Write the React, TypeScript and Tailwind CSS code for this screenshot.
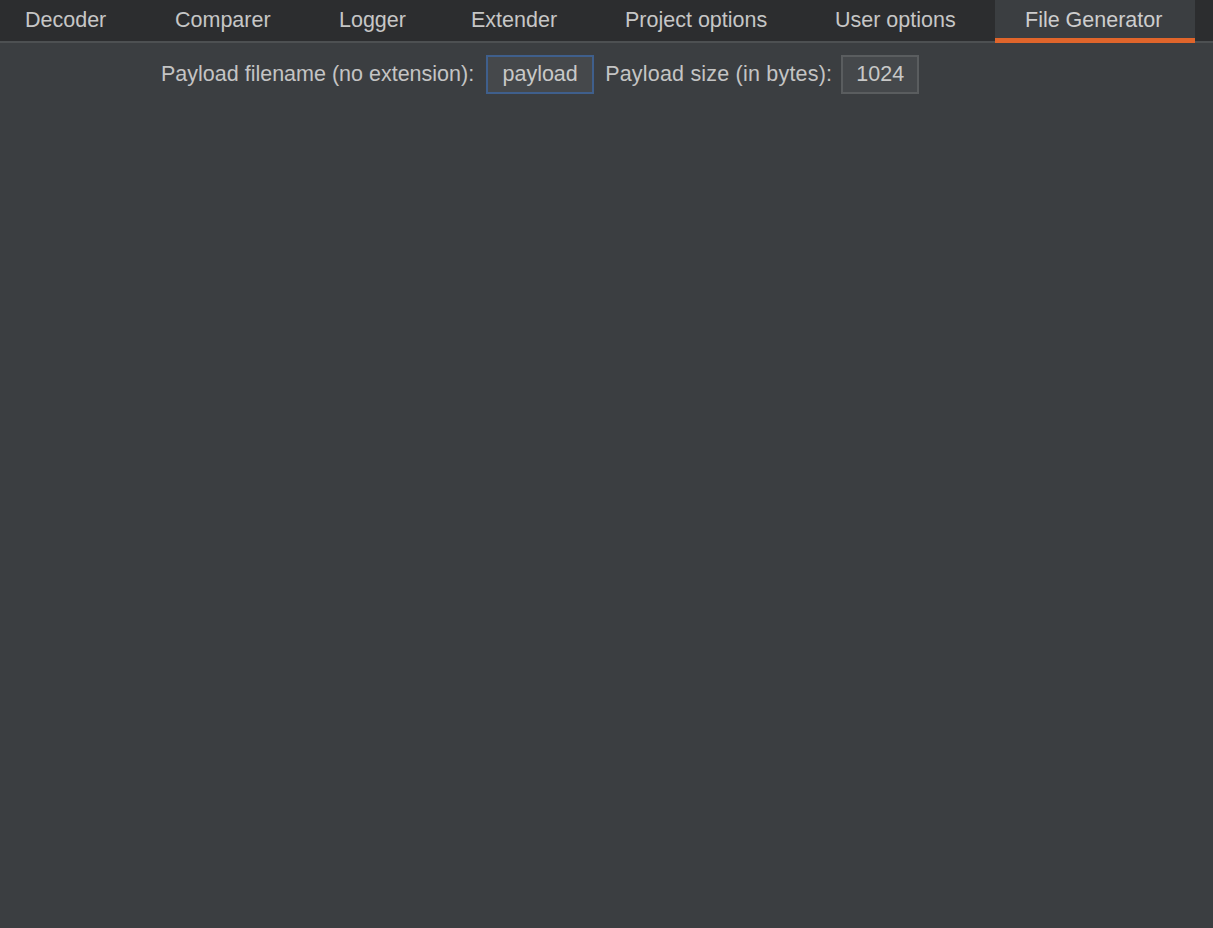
const tabs = [
  { label: "Decoder", w: "w-[145px] pl-[25px]" },
  { label: "Comparer", w: "w-[164px] pl-[30px]" },
  { label: "Logger", w: "w-[132px] pl-[30px]" },
  { label: "Extender", w: "w-[154px] pl-[30px]" },
  { label: "Project options", w: "w-[210px] pl-[30px]" },
  { label: "User options", w: "w-[190px] pl-[30px]" },
  { label: "File Generator", w: "w-[200px] pl-[30px]", active: true },
];

export default function App() {
  return (
    <div
      className="flex h-[928px] w-full flex-col bg-[#3b3e41] text-[21.5px] text-[#c4c4c4]"
      style={{ fontFamily: '"Liberation Sans", Arial, sans-serif' }}
    >
      {/* tab bar */}
      <div className="flex h-[43px] shrink-0 border-b-2 border-[#4d5052] bg-[#2c2d2f]">
        {tabs.map((t) => (
          <div
            key={t.label}
            className={`${t.w} relative flex shrink-0 items-center whitespace-nowrap ${
              t.active ? "bg-[#3b3e41] text-[#cdcdcd]" : "text-[#c6c6c6]"
            }`}
          >
            {t.label}
            {t.active && (
              <span className="absolute -bottom-[2px] left-0 right-0 h-[5px] bg-[#e0652b]" />
            )}
          </div>
        ))}
      </div>

      {/* options row */}
      <div className="flex items-center pl-[161px] pt-[12px]">
        <span className="whitespace-nowrap">Payload filename (no extension):</span>
        <div className="ml-[12px] flex h-[39px] w-[108px] items-center justify-center border-2 border-[#3f5f8c] bg-[#45484b] text-[#c8c8c8]">
          payload
        </div>
        <span className="ml-[11px] whitespace-nowrap tracking-[0.2px]">Payload size (in bytes):</span>
        <div className="ml-[9px] flex h-[39px] w-[78px] items-center justify-center border-2 border-[#5a5d5f] bg-[#45484b] text-[#c8c8c8]">
          1024
        </div>
      </div>
    </div>
  );
}
